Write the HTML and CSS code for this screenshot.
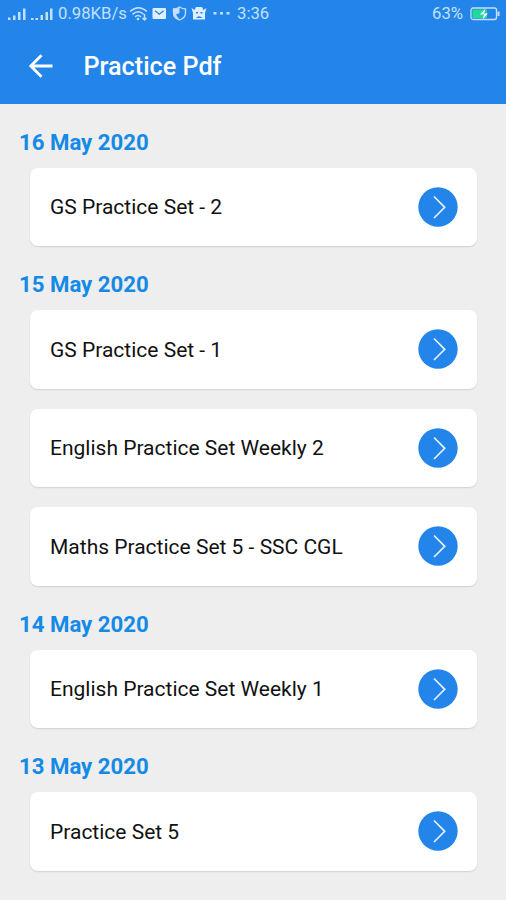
FILE: index.html
```html
<!DOCTYPE html>
<html lang="en">
<head>
<meta charset="utf-8">
<meta name="viewport" content="width=device-width">
<title>Practice Pdf</title>
<link rel="stylesheet" href="styles.css">
</head>
<body>
<svg width="0" height="0" class="defs" aria-hidden="true">
  <symbol id="go" viewBox="0 0 40 40">
    <circle cx="20" cy="20" r="19.7" fill="#2385ea"/>
    <path d="M16 9.5 26.7 20.3 16 31" fill="none" stroke="#e4f1ff" stroke-width="1.7"/>
  </symbol>
</svg>
<header class="top">
  <div class="status">
    <svg class="signals" width="48" height="14" viewBox="0 0 48 14" fill="currentColor">
      <path d="M1 10.500h2.500V13H1zM6 8.500h2.500V13H6zM11 5h2.500v8H11zM16 1.500h2.500V13H16zM24 11h2.500v2H24zM28.500 11H31v2h-2.500zM33.500 8H36v5h-2.500zM38.500 5H41v8h-2.500zM43 1.500h2.500V13H43z"/>
    </svg>
    <span class="speed">0.98KB/s</span>
    <svg class="icons" width="102" height="18" viewBox="129 5 102 18" fill="none" stroke="currentColor">
      <path stroke-width="1.500" d="M130 11.500q8.500-7.500 17 0M132.500 14.300q6-5 11 0M135 17q3-3 6 0M144.500 14v6m-2-2 2 2 2-2"/>
      <circle cx="138" cy="19" r="1.300" fill="currentColor" stroke="none"/>
      <rect x="152.500" y="8" width="13.500" height="11" rx="1" fill="#e0efff" stroke="none"/>
      <path stroke="#2385ea" stroke-width="1.400" d="m155 10.800 4.300 3.400 4.300-3.400"/>
      <path stroke-width="1.300" d="M179.500 7q3 2 6 2v4q0 5-6 7-6-2-6-7V9q3 0 6-2z"/>
      <path fill="currentColor" stroke="none" d="M179.500 7.500V13l-3.500 1.500 3.500 5.500q-6-2-6-7V9q3 0 6-1.500z"/>
      <path fill="#e0efff" stroke="none" d="m191.500 8 3 2 1.500-3h6l1.500 3 3-2-1.500 5v6.500h-12V13z"/>
      <path fill="#2385ea" stroke="none" d="M196 12h2v1.500h-2zM200.500 12h2v1.500h-2zM196 18q3-3.500 6.500 0z"/>
      <path fill="currentColor" stroke="none" d="M213.500 12h3v2.500h-3zM220 12h3v2.500h-3zM226.500 12h3v2.500h-3z"/>
    </svg>
    <span class="clock">3:36</span>
    <span class="percent">63%</span>
    <svg class="battery" width="30" height="14" viewBox="0 0 30 14">
      <rect x="1" y="1" width="25.500" height="11.500" rx="2" fill="none" stroke="#c4e0ff" stroke-width="1.300"/>
      <path d="M2.500 2.500H17V11H2.500z" fill="#20d99a"/>
      <path d="M27.500 4.500h2v4.500h-2z" fill="#c4e0ff"/>
      <path d="m15.500 1.500-5.500 6h4l-1.500 5 5.500-6h-4z" fill="#fff"/>
    </svg>
  </div>
  <div class="bar">
    <svg class="back" width="26" height="26" viewBox="0 0 26 26" fill="none" stroke="#fff" stroke-width="2.800">
      <path d="M24.500 13H3M13.500 2.300 2.800 13l10.700 10.700"/>
    </svg>
    <h1>Practice Pdf</h1>
  </div>
</header>
<main>
  <section>
    <h2>16 May 2020</h2>
    <div class="cards">
      <a class="card"><span>GS Practice Set - 2</span><svg class="go"><use href="#go"/></svg></a>
    </div>
  </section>
  <section>
    <h2>15 May 2020</h2>
    <div class="cards">
      <a class="card"><span>GS Practice Set - 1</span><svg class="go"><use href="#go"/></svg></a>
      <a class="card"><span>English Practice Set Weekly 2</span><svg class="go"><use href="#go"/></svg></a>
      <a class="card"><span>Maths Practice Set 5 - SSC CGL</span><svg class="go"><use href="#go"/></svg></a>
    </div>
  </section>
  <section>
    <h2>14 May 2020</h2>
    <div class="cards">
      <a class="card"><span>English Practice Set Weekly 1</span><svg class="go"><use href="#go"/></svg></a>
    </div>
  </section>
  <section>
    <h2>13 May 2020</h2>
    <div class="cards">
      <a class="card"><span>Practice Set 5</span><svg class="go"><use href="#go"/></svg></a>
    </div>
  </section>
</main>
</body>
</html>
```
FILE: styles.css
```css
* { box-sizing: border-box; }
body {
  margin: 0;
  height: 900px;
  overflow: hidden;
  background: #eee;
  font-family: Roboto, "Liberation Sans", sans-serif;
}
svg { display: block; flex: none; }
.defs { position: absolute; }
.top { height: 103.500px; background: #2385ea; color: #fff; }
.status {
  display: flex;
  align-items: center;
  height: 27px;
  padding: 0 7px;
  color: #c4e0ff;
  font-size: 16.700px;
  line-height: 20px;
  white-space: nowrap;
}
.signals { margin-right: 3px; }
.speed { width: 71px; }
.clock { margin-left: 6px; }
.percent { margin-left: auto; margin-right: 7px; }
.battery { margin-right: -1px; }
.bar { display: flex; align-items: center; height: 78px; padding-left: 28px; }
h1 { margin: 0 0 0 29.500px; padding-top: 1px; font-size: 25.200px; font-weight: 500; line-height: 30px; }
h2 {
  margin: 0;
  height: 64px;
  padding: 24px 0 0 19px;
  color: #148ae6;
  font-size: 22.200px;
  font-weight: 700;
  line-height: 28px;
}
.cards { display: flex; flex-direction: column; gap: 20px; padding: 0 29px 0 30px; }
.card {
  display: flex;
  align-items: center;
  justify-content: space-between;
  height: 78.500px;
  padding: 0 19px 0 20px;
  border-radius: 8px;
  background: #fff;
  box-shadow: 0 1px 1.500px rgba(0, 0, 0, .12);
  color: #111;
  font-size: 21px;
}
.card span { padding-top: 1px; }
.go { width: 40px; height: 40px; }
```
